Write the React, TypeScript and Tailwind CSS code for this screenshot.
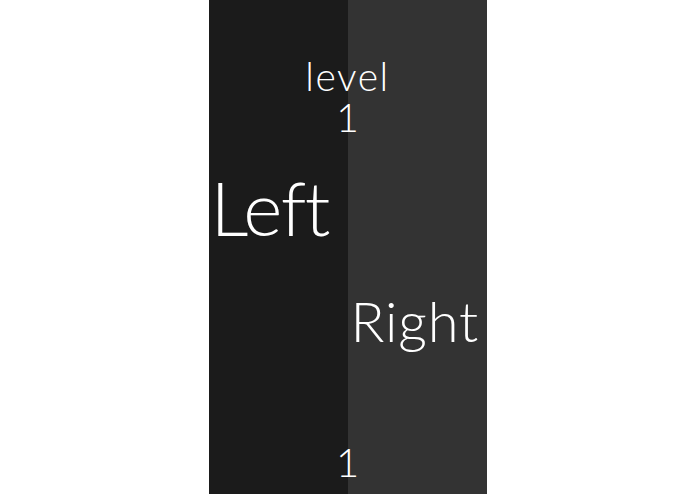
export default function App() {
  const font = { fontFamily: 'Lato, "Open Sans", sans-serif' };

  return (
    <div className="min-h-screen bg-white flex justify-center" style={font}>
      <div className="relative flex w-[278px] h-[494px] text-white font-light">
        {/* left half */}
        <div className="w-1/2 bg-[#1b1b1b] pt-[170px] pl-[2px]">
          <div className="text-[75px] leading-none tracking-[-0.02em]">Left</div>
        </div>

        {/* right half */}
        <div className="w-1/2 bg-[#333333] pt-[293px] pl-[3px]">
          <div className="text-[56px] leading-none tracking-[0.015em]">Right</div>
        </div>

        {/* level counter sits across both halves */}
        <div className="absolute inset-0 flex flex-col items-center pointer-events-none">
          <div className="mt-[57px] text-[39px] leading-none tracking-[0.04em]">level</div>
          <div className="mt-[2px] text-[39px] leading-none">1</div>
          <div className="mt-auto mb-[12px] text-[40px] leading-none">1</div>
        </div>
      </div>
    </div>
  );
}
